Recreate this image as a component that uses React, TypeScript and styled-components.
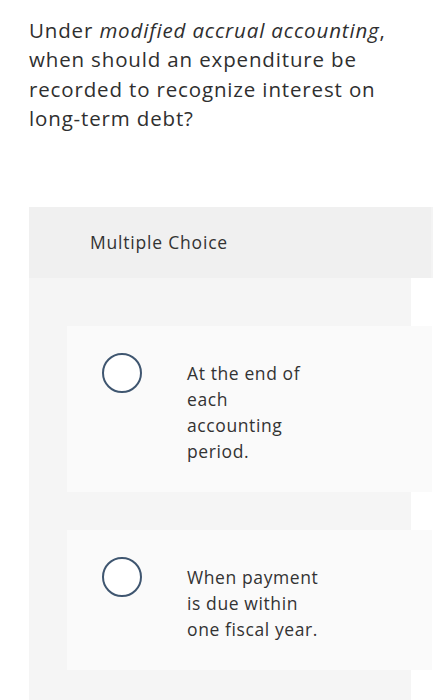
import styled, { createGlobalStyle } from "styled-components";

const GlobalStyle = createGlobalStyle`
  html, body {
    margin: 0;
    padding: 0;
    background: #ffffff;
  }
  body {
    font-family: "Open Sans", "Liberation Sans", sans-serif;
    color: #333333;
  }
`;

interface IOption {
  id: string;
  text: string;
}

const OPTIONS: IOption[] = [
  { id: "a", text: "At the end of each accounting period." },
  { id: "b", text: "When payment is due within one fiscal year." },
];

const App = () => {
  return (
    <>
      <GlobalStyle />
      <Page>
        <Question>
          Under <em>modified accrual accounting</em>, when should an
          expenditure be recorded to recognize interest on long-term debt?
        </Question>
        <ChoicePanel>
          <PanelHeader>Multiple Choice</PanelHeader>
          <PanelBody>
            {OPTIONS.map((option) => (
              <OptionCard key={option.id}>
                <Radio />
                <OptionText>{option.text}</OptionText>
              </OptionCard>
            ))}
          </PanelBody>
        </ChoicePanel>
      </Page>
    </>
  );
};

const Page = styled.div`
  padding: 16px 0 0 29px;
  height: 700px;
  box-sizing: border-box;
  overflow: hidden;
`;

const Question = styled.p`
  margin: 0;
  width: 372px;
  font-size: 20.5px;
  line-height: 29.3px;
  letter-spacing: 0.85px;
  color: #2f2f2f;

  em {
    font-style: italic;
  }
`;

const ChoicePanel = styled.div`
  margin-top: 74px;
  display: flex;
  flex-direction: column;
`;

const PanelHeader = styled.div`
  width: 404px;
  height: 71px;
  box-sizing: border-box;
  display: flex;
  align-items: center;
  padding-left: 61px;
  padding-bottom: 2px;
  background: #f0f0f0;
  border-right: 2px solid #f4f4f4;
  font-size: 17.5px;
  letter-spacing: 0.8px;
  color: #333333;
`;

const PanelBody = styled.div`
  width: 382px;
  background: #f5f5f5;
  padding: 48px 0 40px 38px;
  box-sizing: border-box;
  display: flex;
  flex-direction: column;
  gap: 38px;
`;

const OptionCard = styled.div`
  width: 365px;
  background: #fafafa;
  display: flex;
  align-items: flex-start;
  padding: 27px 0 28px 35px;
  box-sizing: border-box;
`;

const Radio = styled.span`
  flex: none;
  width: 40px;
  height: 40px;
  box-sizing: border-box;
  border-radius: 50%;
  border: 2px solid #3f5670;
  background: #ffffff;
`;

const OptionText = styled.div`
  margin: 7px 0 0 45px;
  width: 137px;
  font-size: 17.5px;
  line-height: 26px;
  letter-spacing: 0.6px;
  color: #333333;
`;

export default App;
